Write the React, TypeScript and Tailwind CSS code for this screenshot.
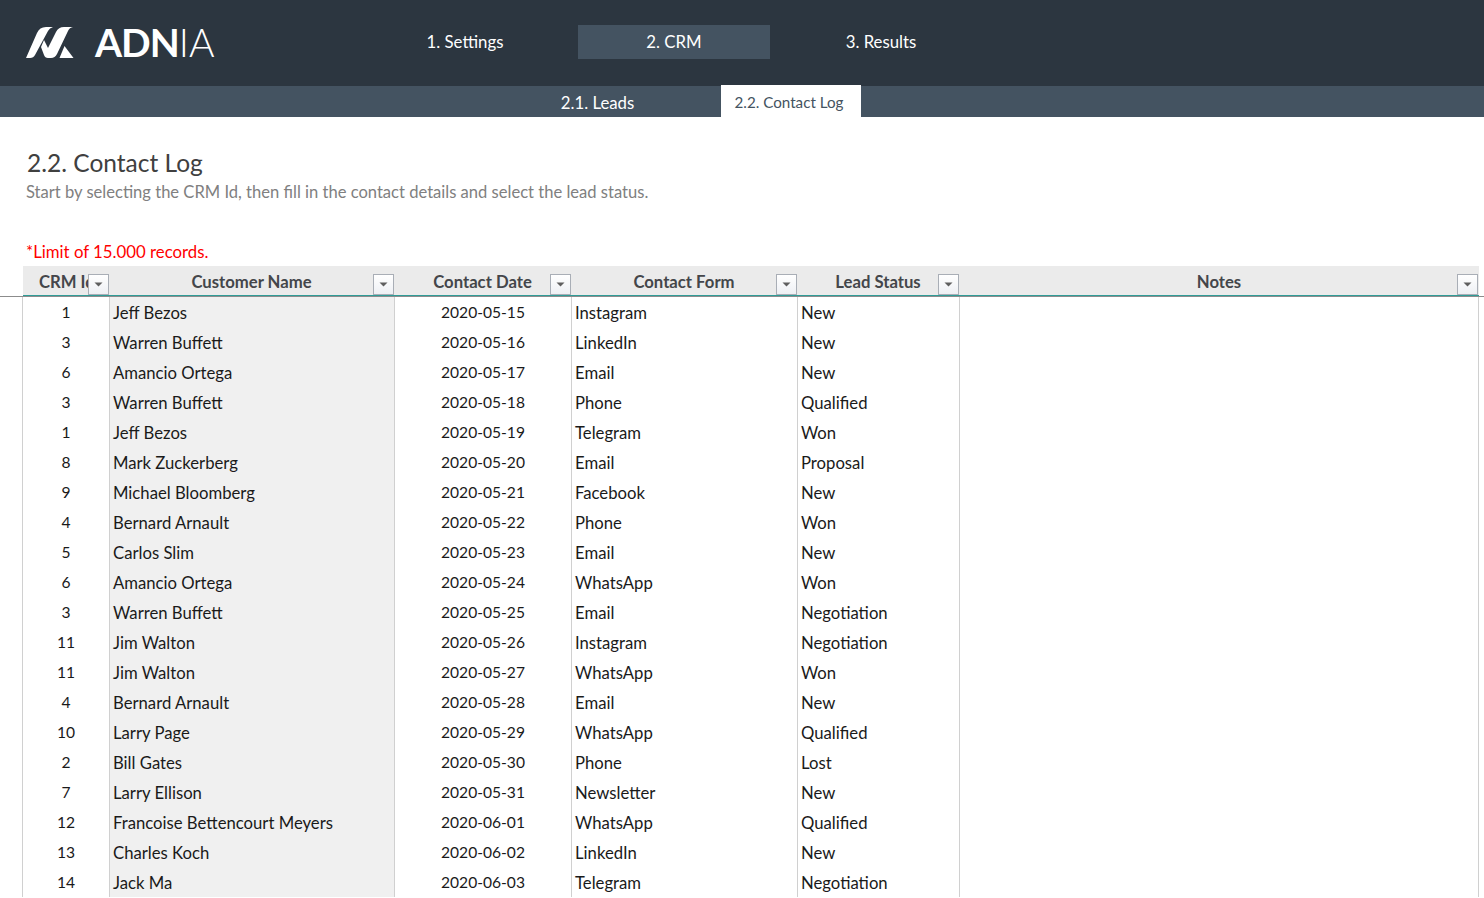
const rows: [string, string, string, string, string][] = [
  ["1", "Jeff Bezos", "2020-05-15", "Instagram", "New"],
  ["3", "Warren Buffett", "2020-05-16", "LinkedIn", "New"],
  ["6", "Amancio Ortega", "2020-05-17", "Email", "New"],
  ["3", "Warren Buffett", "2020-05-18", "Phone", "Qualified"],
  ["1", "Jeff Bezos", "2020-05-19", "Telegram", "Won"],
  ["8", "Mark Zuckerberg", "2020-05-20", "Email", "Proposal"],
  ["9", "Michael Bloomberg", "2020-05-21", "Facebook", "New"],
  ["4", "Bernard Arnault", "2020-05-22", "Phone", "Won"],
  ["5", "Carlos Slim", "2020-05-23", "Email", "New"],
  ["6", "Amancio Ortega", "2020-05-24", "WhatsApp", "Won"],
  ["3", "Warren Buffett", "2020-05-25", "Email", "Negotiation"],
  ["11", "Jim Walton", "2020-05-26", "Instagram", "Negotiation"],
  ["11", "Jim Walton", "2020-05-27", "WhatsApp", "Won"],
  ["4", "Bernard Arnault", "2020-05-28", "Email", "New"],
  ["10", "Larry Page", "2020-05-29", "WhatsApp", "Qualified"],
  ["2", "Bill Gates", "2020-05-30", "Phone", "Lost"],
  ["7", "Larry Ellison", "2020-05-31", "Newsletter", "New"],
  ["12", "Francoise Bettencourt Meyers", "2020-06-01", "WhatsApp", "Qualified"],
  ["13", "Charles Koch", "2020-06-02", "LinkedIn", "New"],
  ["14", "Jack Ma", "2020-06-03", "Telegram", "Negotiation"],
];

function Filter({ last = false }: { last?: boolean }) {
  return (
    <span className={`absolute bottom-0 flex h-[21px] w-[21px] items-center justify-center border border-[#a9aeb6] bg-gradient-to-b from-[#ffffff] to-[#eef0f4] ${last ? "right-[1px]" : "right-0"}`}>
      <svg width="9" height="5" viewBox="0 0 9 5">
        <path d="M0.5 0.5H8.5L4.5 4.5Z" fill="#5f5f5f" />
      </svg>
    </span>
  );
}

function Head({ label, cls = "justify-center", last = false }: { label: string; cls?: string; last?: boolean }) {
  return (
    <div className={`relative flex h-[29px] items-center overflow-hidden whitespace-nowrap pt-[4px] text-[16.7px] font-bold text-[#44464a] ${cls}`}>
      {label}
      <Filter last={last} />
    </div>
  );
}

export default function App() {
  return (
    <div className="h-[898px] w-[1484px] overflow-hidden bg-white font-['Lato','Liberation_Sans',sans-serif] text-[16.7px] leading-none text-[#1a1a1a]">
      <header className="flex h-[86px] items-center bg-[#2c3640] pb-[2px] text-white">
        <div className="flex w-[386px] items-center pl-[26px]">
          <svg width="48" height="32" viewBox="0 0 48 32" fill="white" className="mt-[1px]">
            <path d="M0 31 L11 6 Q13.500 0 20 0 L27 0 Q23.500 1 22 4 L9 28 Q7.500 31 4 31 Z" />
            <path d="M15 20 L18 13 L22 21 L30 5 Q32.500 0 38 0 L47 0 Q43.500 0.500 42 4 L31 27 Q29 31 25 31 L22 31 Q19 31 18 28 Z" />
            <path d="M38.500 19 L47.500 31 L33.500 31 Z" />
          </svg>
          <span className="ml-[21px] flex items-baseline text-[39px] tracking-[-1px]">
            <span className="font-bold">ADN</span>
            <span className="font-light tracking-[0px]">IA</span>
          </span>
        </div>
        <nav className="flex items-center text-[16.8px]">
          <div className="flex h-[34px] w-[158px] items-center justify-center pt-[1px]">1. Settings</div>
          <div className="ml-[34px] flex h-[34px] w-[192px] items-center justify-center bg-[#445361] pt-[1px]">2. CRM</div>
          <div className="ml-[34px] flex h-[34px] w-[154px] items-center justify-center pt-[1px]">3. Results</div>
        </nav>
      </header>

      <div className="flex h-[31px] bg-[#445361] pl-[474px] text-[16.8px] text-white">
        <div className="flex h-full w-[247px] items-center justify-center pt-[3px]">2.1. Leads</div>
        <div className="-mt-[1px] flex h-[32px] w-[140px] items-center justify-center bg-white pt-[3px] pr-[4px] text-[15.2px] text-[#445361]">2.2. Contact Log</div>
      </div>

      <section className="pl-[26px]">
        <h1 className="pt-[33px] pl-[1px] text-[24.5px] leading-[26px] text-[#404040]">2.2. Contact Log</h1>
        <p className="mt-[6px] text-[16.57px] leading-[20px] text-[#808080]">
          Start by selecting the CRM Id, then fill in the contact details and select the lead status.
        </p>
        <p className="mt-[40px] text-[16.8px] leading-[20px] text-[#ff0000]">*Limit of 15.000 records.</p>
      </section>

      <div className="mt-[4px] border-b border-[#8c8c8c]">
        <div className="ml-[23px] grid w-[1456px] grid-cols-[86px_285px_177px_226px_162px_520px] border-b border-[#2f9c97] bg-[#ebebeb]">
          <Head label="CRM Id" cls="justify-start pl-[16px]" />
          <Head label="Customer Name" />
          <Head label="Contact Date" />
          <Head label="Contact Form" />
          <Head label="Lead Status" />
          <Head label="Notes" last />
        </div>
      </div>

      <div className="ml-[22px] grid w-[1457px] grid-cols-[87px_286px_176px_226px_163px_519px]">
        {rows.map((r, i) => (
          <div key={i} className="contents">
            <div className="flex h-[30px] items-center justify-center border-l border-[#d0d0d0] pt-[1px] text-[15.6px]">{r[0]}</div>
            <div className="flex h-[30px] items-center border-x border-[#d0d0d0] bg-[#f0f0f0] pt-[2px] pl-[3px]">{r[1]}</div>
            <div className="flex h-[30px] items-center justify-center pt-[1px] text-[15.6px]">{r[2]}</div>
            <div className="flex h-[30px] items-center border-l border-[#d0d0d0] pt-[2px] pl-[3px]">{r[3]}</div>
            <div className="flex h-[30px] items-center border-x border-[#d0d0d0] pt-[2px] pl-[3px]">{r[4]}</div>
            <div className="h-[30px] border-r border-[#d0d0d0]" />
          </div>
        ))}
      </div>
    </div>
  );
}
